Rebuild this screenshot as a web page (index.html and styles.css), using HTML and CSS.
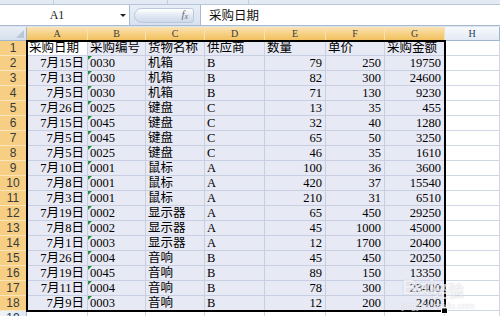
FILE: index.html
```html
<!DOCTYPE html>
<html>
<head>
<meta charset="utf-8">
<link rel="stylesheet" href="styles.css">
</head>
<body>
<div class="app">
  <div class="topstrip"><span class="seg s1"></span><span class="seg s2"></span><span class="seg s3"></span></div>
  <div class="fbar">
    <div class="namebox"><span class="nb-text">A1</span><span class="nb-arrow"></span></div>
    <div class="fxzone"><div class="oval"><span class="fx">f<sub>x</sub></span></div></div>
    <div class="finput">采购日期</div>
  </div>
  <div class="sheet">
    <div class="corner"></div>
    <div class="ch sel">A</div><div class="ch sel">B</div><div class="ch sel">C</div><div class="ch sel">D</div><div class="ch sel">E</div><div class="ch sel">F</div><div class="ch sel">G</div><div class="ch">H</div>

    <div class="rh sel">1</div><div class="c in active">采购日期</div><div class="c in">采购编号</div><div class="c in">货物名称</div><div class="c in">供应商</div><div class="c in">数量</div><div class="c in">单价</div><div class="c in">采购金额</div><div class="c"></div>
    <div class="rh sel">2</div><div class="c in r">7月15日</div><div class="c in tri">0030</div><div class="c in">机箱</div><div class="c in">B</div><div class="c in r">79</div><div class="c in r">250</div><div class="c in r">19750</div><div class="c"></div>
    <div class="rh sel">3</div><div class="c in r">7月13日</div><div class="c in tri">0030</div><div class="c in">机箱</div><div class="c in">B</div><div class="c in r">82</div><div class="c in r">300</div><div class="c in r">24600</div><div class="c"></div>
    <div class="rh sel">4</div><div class="c in r">7月5日</div><div class="c in tri">0030</div><div class="c in">机箱</div><div class="c in">B</div><div class="c in r">71</div><div class="c in r">130</div><div class="c in r">9230</div><div class="c"></div>
    <div class="rh sel">5</div><div class="c in r">7月26日</div><div class="c in tri">0025</div><div class="c in">键盘</div><div class="c in">C</div><div class="c in r">13</div><div class="c in r">35</div><div class="c in r">455</div><div class="c"></div>
    <div class="rh sel">6</div><div class="c in r">7月15日</div><div class="c in tri">0045</div><div class="c in">键盘</div><div class="c in">C</div><div class="c in r">32</div><div class="c in r">40</div><div class="c in r">1280</div><div class="c"></div>
    <div class="rh sel">7</div><div class="c in r">7月5日</div><div class="c in tri">0045</div><div class="c in">键盘</div><div class="c in">C</div><div class="c in r">65</div><div class="c in r">50</div><div class="c in r">3250</div><div class="c"></div>
    <div class="rh sel">8</div><div class="c in r">7月5日</div><div class="c in tri">0025</div><div class="c in">键盘</div><div class="c in">C</div><div class="c in r">46</div><div class="c in r">35</div><div class="c in r">1610</div><div class="c"></div>
    <div class="rh sel">9</div><div class="c in r">7月10日</div><div class="c in tri">0001</div><div class="c in">鼠标</div><div class="c in">A</div><div class="c in r">100</div><div class="c in r">36</div><div class="c in r">3600</div><div class="c"></div>
    <div class="rh sel">10</div><div class="c in r">7月8日</div><div class="c in tri">0001</div><div class="c in">鼠标</div><div class="c in">A</div><div class="c in r">420</div><div class="c in r">37</div><div class="c in r">15540</div><div class="c"></div>
    <div class="rh sel">11</div><div class="c in r">7月3日</div><div class="c in tri">0001</div><div class="c in">鼠标</div><div class="c in">A</div><div class="c in r">210</div><div class="c in r">31</div><div class="c in r">6510</div><div class="c"></div>
    <div class="rh sel">12</div><div class="c in r">7月19日</div><div class="c in tri">0002</div><div class="c in">显示器</div><div class="c in">A</div><div class="c in r">65</div><div class="c in r">450</div><div class="c in r">29250</div><div class="c"></div>
    <div class="rh sel">13</div><div class="c in r">7月8日</div><div class="c in tri">0002</div><div class="c in">显示器</div><div class="c in">A</div><div class="c in r">45</div><div class="c in r">1000</div><div class="c in r">45000</div><div class="c"></div>
    <div class="rh sel">14</div><div class="c in r">7月1日</div><div class="c in tri">0003</div><div class="c in">显示器</div><div class="c in">A</div><div class="c in r">12</div><div class="c in r">1700</div><div class="c in r">20400</div><div class="c"></div>
    <div class="rh sel">15</div><div class="c in r">7月26日</div><div class="c in tri">0004</div><div class="c in">音响</div><div class="c in">B</div><div class="c in r">45</div><div class="c in r">450</div><div class="c in r">20250</div><div class="c"></div>
    <div class="rh sel">16</div><div class="c in r">7月19日</div><div class="c in tri">0045</div><div class="c in">音响</div><div class="c in">B</div><div class="c in r">89</div><div class="c in r">150</div><div class="c in r">13350</div><div class="c"></div>
    <div class="rh sel">17</div><div class="c in r">7月11日</div><div class="c in tri">0004</div><div class="c in">音响</div><div class="c in">B</div><div class="c in r">78</div><div class="c in r">300</div><div class="c in r">23400</div><div class="c"></div>
    <div class="rh sel">18</div><div class="c in r">7月9日</div><div class="c in tri">0003</div><div class="c in">音响</div><div class="c in">B</div><div class="c in r">12</div><div class="c in r">200</div><div class="c in r">2400</div><div class="c"></div>
    <div class="rh">19</div><div class="c"></div><div class="c"></div><div class="c"></div><div class="c"></div><div class="c"></div><div class="c"></div><div class="c"></div><div class="c"></div>

    <div class="selbox"></div>
  </div>
  <div class="wm"><span class="wm-big">Bai</span><span class="wm-cn">经验</span><span class="wm-url">jingyan.baidu.com</span></div>
</div>
</body>
</html>
```
FILE: styles.css
```css
html, body { margin: 0; padding: 0; }
body { width: 500px; height: 316px; overflow: hidden; background: #fff; font-family: "Liberation Serif", "Noto Sans CJK SC", serif; }
.app { position: relative; width: 500px; height: 316px; overflow: hidden; background: #dbe4f1; }

.topstrip { height: 4px; display: flex; border-bottom: 1px solid #b9c6d8; background: #e3eaf4; }
.seg { display: block; height: 4px; border-right: 1px solid #c4cfde; }
.s1 { width: 53px; } .s2 { width: 113px; } .s3 { width: 80px; }

.fbar { height: 20px; display: flex; border-bottom: 1px solid #a9b9cf; background: #dce6f3; }
.namebox { width: 129px; background: #fff; border-right: 1px solid #a9b9cf; display: flex; align-items: center; }
.nb-text { width: 114px; text-align: center; font-family: "Liberation Serif", serif; font-size: 12px; color: #222; }
.nb-arrow { width: 0; height: 0; border-left: 3px solid transparent; border-right: 3px solid transparent; border-top: 3px solid #222; margin-left: 6px; }
.fxzone { width: 66px; display: flex; align-items: center; padding-left: 4px; background: linear-gradient(#e9eff8, #d7e1ef); }
.oval { width: 60px; height: 15px; border-radius: 8px 3px 3px 8px; background: linear-gradient(#ffffff, #dfe7f2 55%, #cdd9ea); border: 1px solid #b9c8dc; display: flex; align-items: center; justify-content: flex-end; padding-right: 5px; box-sizing: border-box; }
.fx { font-family: "Liberation Serif", serif; font-style: italic; font-size: 11px; color: #6a6f78; line-height: 10px; }
.fx sub { font-size: 8px; vertical-align: -1px; }
.finput { flex: 1; background: #fff; border-left: 1px solid #a9b9cf; font-size: 12.5px; line-height: 20px; padding-left: 8px; color: #111; font-family: "Noto Sans CJK SC", sans-serif; }

.sheet { position: relative; margin-top: 1px; display: grid; grid-template-columns: 27px 61px 58px 59px 60px 61px 59px 60px 55px; grid-template-rows: 14px repeat(19, 15px); background: #fff; }
.corner { background: linear-gradient(#e9eef6, #d5dfec); border-right: 1px solid #9eb6ce; border-bottom: 1px solid #9eb6ce; box-sizing: border-box; position: relative; }
.corner::after { content: ""; position: absolute; right: 2px; bottom: 2px; border-left: 8px solid transparent; border-bottom: 8px solid #b8c6d8; }
.ch { box-sizing: border-box; border-right: 1px solid #9eb6ce; border-bottom: 1px solid #9eb6ce; background: linear-gradient(#f7f9fc, #e2eaf5); text-align: center; font-family: "Liberation Serif", serif; font-size: 10px; line-height: 13px; color: #27415f; }
.ch.sel { background: linear-gradient(#fbe3b6, #f6cf80 55%, #f1c15f); border-right-color: #f6e0b5; border-bottom: 1px solid #f29436; color: #3b3b3b; }
.rh { box-sizing: border-box; border-right: 1px solid #9eb6ce; border-bottom: 1px solid #9eb6ce; background: linear-gradient(90deg, #eef3f9, #dfe7f2); text-align: center; font-family: "Liberation Sans", sans-serif; font-size: 12px; line-height: 15px; color: #27415f; }
.rh.sel { background: #f6cf84; border-bottom-color: #f9e4bb; border-right: 1px solid #f29436; color: #3b3b3b; }

.c { box-sizing: border-box; border-right: 1px solid #d0d7e5; border-bottom: 1px solid #d0d7e5; font-size: 12.5px; line-height: 15px; white-space: nowrap; overflow: visible; padding: 0 2px; color: #000; position: relative; }
.c.in { background: #e7e9f4; border-color: #c8cfe2; }
.c.in.active { background: #fff; }
.c.r { text-align: right; padding-right: 3px; }
.c.tri::before { content: ""; position: absolute; left: 0; top: 0; border-top: 4px solid #1f8f3a; border-right: 4px solid transparent; }

.selbox { position: absolute; grid-column: 2 / 9; grid-row: 2 / 20; top: -1px; left: -1px; right: -1px; bottom: -1px; border: 2px solid #000; pointer-events: none; }
.selbox::after { content: ""; position: absolute; right: -4px; bottom: -4px; width: 5px; height: 5px; background: #000; border: 1px solid #fff; }

.wm { position: absolute; left: 402px; top: 275px; width: 96px; height: 40px; pointer-events: none; opacity: 0.75; }
.wm-big { position: absolute; left: 0; top: 0; font-family: "Liberation Sans", sans-serif; font-size: 21px; font-weight: bold; color: rgba(255,255,255,0.85); text-shadow: 0 0 1px #aab; }
.wm-cn { position: absolute; left: 30px; top: 3px; font-family: "Noto Sans CJK SC", sans-serif; font-size: 16px; font-weight: bold; color: rgba(255,255,255,0.85); text-shadow: 0 0 1px #aab; }
.wm-url { position: absolute; left: 0; top: 26px; font-family: "Liberation Sans", sans-serif; font-size: 9px; color: rgba(255,255,255,0.9); text-shadow: 0 0 1px #bbc; }
```
